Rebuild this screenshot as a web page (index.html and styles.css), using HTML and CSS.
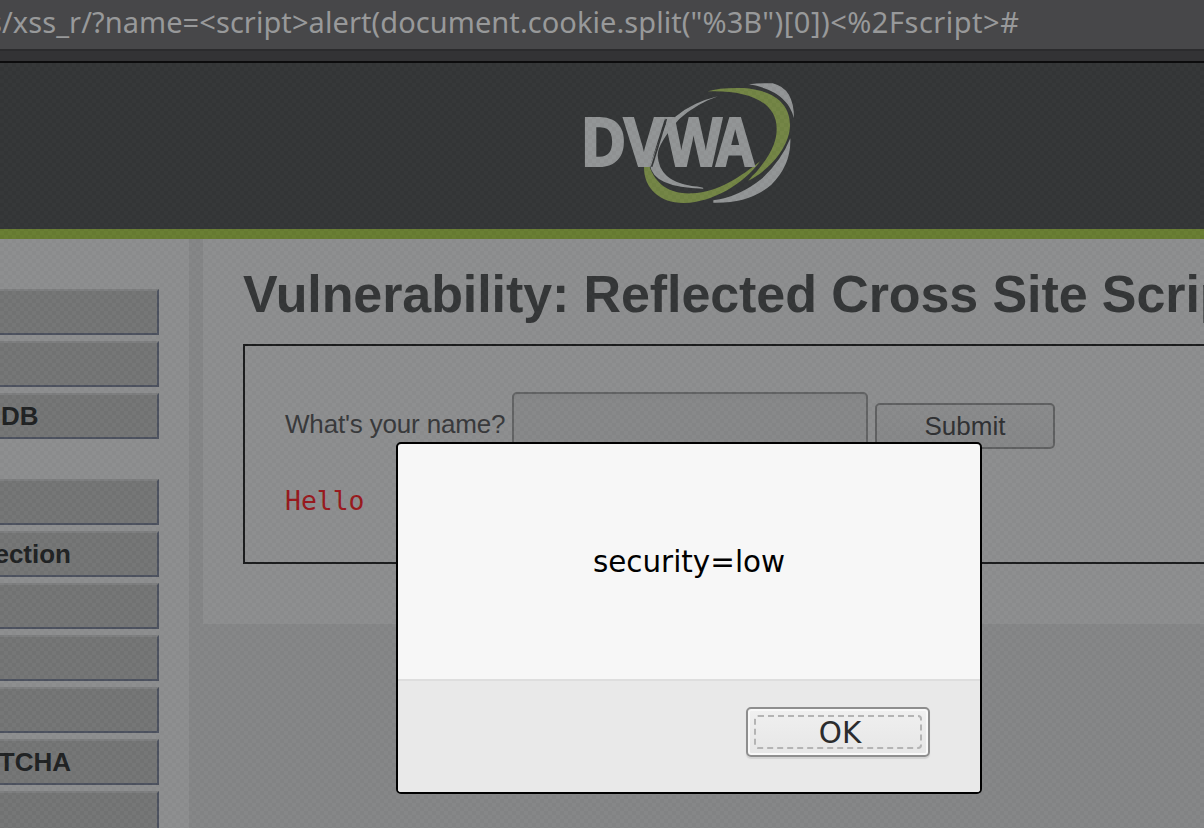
FILE: index.html
```html
<!DOCTYPE html>
<html lang="en">
<head>
<meta charset="utf-8">
<title>Vulnerability: Reflected Cross Site Scripting (XSS)</title>
<link rel="stylesheet" href="styles.css">
</head>
<body>
<div class="browser">
  <div class="urlbar"><span class="url">s/xss_r/?name=&lt;script&gt;alert(document.cookie.split("%3B<span class="url-tail">")[0])&lt;%2Fscript&gt;#</span></span></div>
  <div class="toolbar-edge"></div>
  <header class="header">
    <svg class="logo" viewBox="0 0 720 435" role="img" aria-label="DVWA">
      <g fill="#929596">
        <path d="M537 43 Q570 38 608 40 Q672 55 672 145 Q652 62 537 43Z"/>
        <path d="M661 205 Q664 285 604 344 Q538 401 430 398 V391 Q506 382 577 325 Q635 270 661 205Z"/>
        <path d="M444 79 Q370 96 316 140 L286 164 L240 285 Q249 353 400 356 Q403 351 365 348 Q267 334 263 256 Q263 220 328 147 Q383 99 444 79Z"/>
      </g>
      <g fill="#738545">
        <path d="M413 64 Q450 52 520 54 C620 61 660 108 660 165 C660 225 605 297 535 332 Q548 315 559 306 C609 246 620 209 620 176 C620 88 518 59 413 64Z"/>
        <path d="M222 288 H238 C258 347 304 373 367 370 C445 367 513 319 571 273 C518 345 427 396 344 399 C274 401 220 358 222 288Z"/>
      </g>
      <g class="logo-text">
        <text x="31" y="288" textLength="139" lengthAdjust="spacingAndGlyphs">D</text>
        <text x="161" y="288" textLength="121" lengthAdjust="spacingAndGlyphs">V</text>
        <text x="286" y="288" textLength="170" lengthAdjust="spacingAndGlyphs">W</text>
        <text x="438" y="288" textLength="115" lengthAdjust="spacingAndGlyphs">A</text>
      </g>
      <path d="M289 147 L245 290" stroke="#343637" stroke-width="5"/>
    </svg>
  </header>
  <div class="page">
    <nav class="menu">
      <ul class="menu-group">
        <li class="menu-item"></li>
        <li class="menu-item"></li>
        <li class="menu-item menu-db">DB</li>
      </ul>
      <ul class="menu-group">
        <li class="menu-item"></li>
        <li class="menu-item menu-long">ection</li>
        <li class="menu-item"></li>
        <li class="menu-item"></li>
        <li class="menu-item"></li>
        <li class="menu-item menu-long">TCHA</li>
        <li class="menu-item"></li>
      </ul>
    </nav>
    <main class="content">
      <h1 class="title">Vulnerability: Reflected Cross Site Scripting (XSS)</h1>
      <section class="panel">
        <form class="form">
          <span class="question">What's your name?</span>
          <span class="field"></span>
          <span class="submit">Submit</span>
        </form>
        <pre class="hello">Hello</pre>
      </section>
    </main>
  </div>
</div>
<div class="grain"></div>
<div class="dialog" role="alertdialog">
  <div class="message">security=low</div>
  <div class="actions"><div class="ok"><span class="ok-focus">OK</span></div></div>
</div>
</body>
</html>
```
FILE: styles.css
```css
* { box-sizing: border-box; }
body {
  margin: 0;
  width: 1204px;
  height: 828px;
  overflow: hidden;
  position: relative;
  font-family: "Liberation Sans", Arial, sans-serif;
}
.browser {
  width: 1204px;
  height: 828px;
  overflow: hidden;
  background: #858687;
}
.urlbar {
  height: 51px;
  background: #474749;
  border-bottom: 2px solid #2b2b2d;
  overflow: hidden;
}
.url {
  display: block;
  margin-left: -12px;
  font: 400 29px/43px "Noto Sans", sans-serif;
  letter-spacing: .07px;
  color: #98999a;
  white-space: nowrap;
}
.url-tail { letter-spacing: .5px; }
.toolbar-edge {
  height: 12px;
  background: #333335;
  border-bottom: 2px solid #0c0c0d;
}
.header {
  height: 176px;
  padding: 7px 0 0 570px;
  background: #343637;
  border-bottom: 10px solid #687d32;
}
.logo { display: block; width: 240px; height: 145px; }
.logo-text {
  font: 700 198px "Open Sans", sans-serif;
  fill: #929596;
  stroke: #929596;
  stroke-width: 6px;
}
.page { display: flex; align-items: flex-start; }
.menu {
  width: 189px;
  height: 589px;
  flex: none;
  padding-top: 50px;
  background: #8d8e8f;
}
.menu-group {
  list-style: none;
  margin: 0 0 40px;
  padding: 0;
  display: flex;
  flex-direction: column;
  gap: 6px;
}
.menu-item {
  width: 159px;
  height: 46px;
  background: #747575;
  border: solid;
  border-width: 2px 2px 2px 0;
  border-color: #7d7e7f #4d525f #4d525f;
  color: #202223;
  font-weight: 700;
  font-size: 26px;
  line-height: 42px;
  white-space: nowrap;
}
.menu-db { padding-left: 1px; }
.menu-long { display: flex; justify-content: flex-end; padding-right: 86px; }
.content {
  width: 1001px;
  height: 385px;
  flex: none;
  margin-left: 14px;
  padding: 25px 0 0 40px;
  background: #8d8e8f;
}
.title {
  margin: 0;
  color: #343637;
  font-size: 52px;
  line-height: 60px;
  letter-spacing: -.09px;
  white-space: nowrap;
}
.panel {
  width: 980px;
  height: 220px;
  margin-top: 20px;
  padding: 46px 40px;
  border: 2px solid #1b1c1d;
}
.form { display: flex; align-items: flex-start; }
.question {
  width: 227px;
  padding-top: 17px;
  font-size: 26px;
  line-height: 30px;
  letter-spacing: -.17px;
  color: #38393b;
  white-space: nowrap;
}
.field {
  width: 356px;
  height: 66px;
  border: 2px solid #626364;
  border-radius: 5px;
  background: linear-gradient(#838485, #878889 8px);
}
.submit {
  width: 180px;
  height: 46px;
  margin: 11px 0 0 7px;
  border: 2px solid #5f6061;
  border-radius: 5px;
  background: linear-gradient(#8a8b8c, #868788);
  color: #303133;
  font-size: 26px;
  line-height: 42px;
  text-align: center;
}
.hello {
  margin: 27px 0 0;
  font: 26.4px/32px "DejaVu Sans Mono", monospace;
  color: #99191d;
}
/* fine diagonal weave of the dimming layer */
.grain {
  position: absolute;
  inset: 63px 0 0;
  background: repeating-conic-gradient(rgba(0,0,0,.025) 0 25%, rgba(255,255,255,.012) 0 50%) 0 0 / 8px 8px;
}
.dialog {
  position: absolute;
  left: 396px;
  top: 442px;
  width: 586px;
  height: 352px;
  border: 2px solid #000;
  border-radius: 5px;
  overflow: hidden;
  background: #f7f7f7;
  font-family: "DejaVu Sans", sans-serif;
}
.message {
  height: 235px;
  color: #000;
  font-size: 29.4px;
  line-height: 237px;
  text-align: center;
}
.actions {
  display: flex;
  justify-content: flex-end;
  height: 113px;
  padding: 26px 50px 0 0;
  border-top: 2px solid #dedede;
  background: #e9e9e9;
}
.ok {
  width: 184px;
  height: 50px;
  padding: 6px 6px 5px;
  border: 2px solid #8e8e8e;
  border-radius: 5px;
  background: linear-gradient(#f0f0f0, #e6e6e6);
  box-shadow: inset 0 0 0 2px #f8f8f8, 0 2px 1px #d2d2d2;
}
.ok-focus {
  display: block;
  height: 34px;
  padding-left: 4px;
  border: 2px dashed #b4b4b4;
  border-radius: 4px;
  color: #2b2c2e;
  font-size: 29.4px;
  line-height: 33px;
  text-align: center;
}
```
